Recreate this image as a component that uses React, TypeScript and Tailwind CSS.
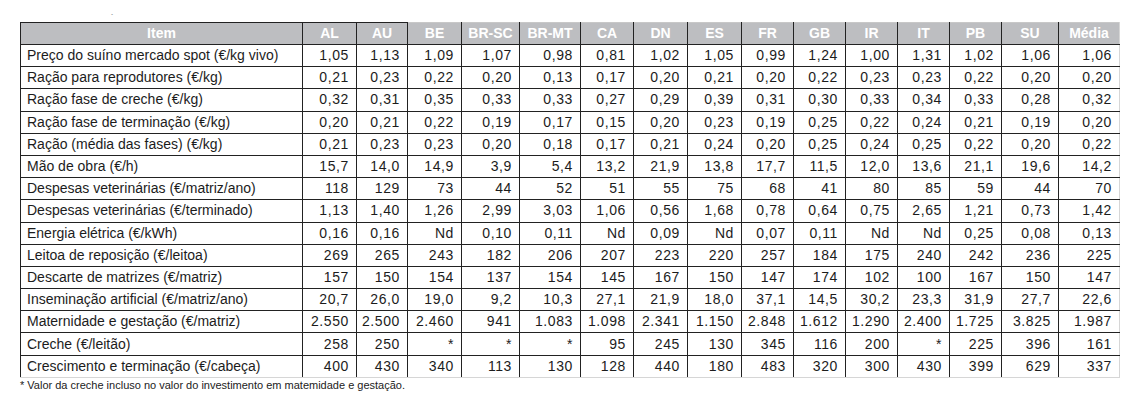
const cols = ['AL', 'AU', 'BE', 'BR-SC', 'BR-MT', 'CA', 'DN', 'ES', 'FR', 'GB', 'IR', 'IT', 'PB', 'SU', 'Média'];
const widths = [282, 54, 51, 54, 58, 61, 53, 54, 54, 52, 52, 52, 52, 52, 57, 61];

const rows: [string, string[]][] = [
  ['Preço do suíno mercado spot (€/kg vivo)', ['1,05', '1,13', '1,09', '1,07', '0,98', '0,81', '1,02', '1,05', '0,99', '1,24', '1,00', '1,31', '1,02', '1,06', '1,06']],
  ['Ração para reprodutores (€/kg)', ['0,21', '0,23', '0,22', '0,20', '0,13', '0,17', '0,20', '0,21', '0,20', '0,22', '0,23', '0,23', '0,22', '0,20', '0,20']],
  ['Ração fase de creche (€/kg)', ['0,32', '0,31', '0,35', '0,33', '0,33', '0,27', '0,29', '0,39', '0,31', '0,30', '0,33', '0,34', '0,33', '0,28', '0,32']],
  ['Ração fase de terminação (€/kg)', ['0,20', '0,21', '0,22', '0,19', '0,17', '0,15', '0,20', '0,23', '0,19', '0,25', '0,22', '0,24', '0,21', '0,19', '0,20']],
  ['Ração (média das fases) (€/kg)', ['0,21', '0,23', '0,23', '0,20', '0,18', '0,17', '0,21', '0,24', '0,20', '0,25', '0,24', '0,25', '0,22', '0,20', '0,22']],
  ['Mão de obra (€/h)', ['15,7', '14,0', '14,9', '3,9', '5,4', '13,2', '21,9', '13,8', '17,7', '11,5', '12,0', '13,6', '21,1', '19,6', '14,2']],
  ['Despesas veterinárias (€/matriz/ano)', ['118', '129', '73', '44', '52', '51', '55', '75', '68', '41', '80', '85', '59', '44', '70']],
  ['Despesas veterinárias (€/terminado)', ['1,13', '1,40', '1,26', '2,99', '3,03', '1,06', '0,56', '1,68', '0,78', '0,64', '0,75', '2,65', '1,21', '0,73', '1,42']],
  ['Energia elétrica (€/kWh)', ['0,16', '0,16', 'Nd', '0,10', '0,11', 'Nd', '0,09', 'Nd', '0,07', '0,11', 'Nd', 'Nd', '0,25', '0,08', '0,13']],
  ['Leitoa de reposição (€/leitoa)', ['269', '265', '243', '182', '206', '207', '223', '220', '257', '184', '175', '240', '242', '236', '225']],
  ['Descarte de matrizes (€/matriz)', ['157', '150', '154', '137', '154', '145', '167', '150', '147', '174', '102', '100', '167', '150', '147']],
  ['Inseminação artificial (€/matriz/ano)', ['20,7', '26,0', '19,0', '9,2', '10,3', '27,1', '21,9', '18,0', '37,1', '14,5', '30,2', '23,3', '31,9', '27,7', '22,6']],
  ['Maternidade e gestação (€/matriz)', ['2.550', '2.500', '2.460', '941', '1.083', '1.098', '2.341', '1.150', '2.848', '1.612', '1.290', '2.400', '1.725', '3.825', '1.987']],
  ['Creche (€/leitão)', ['258', '250', '*', '*', '*', '95', '245', '130', '345', '116', '200', '*', '225', '396', '161']],
  ['Crescimento e terminação (€/cabeça)', ['400', '430', '340', '113', '130', '128', '440', '180', '483', '320', '300', '430', '399', '629', '337']],
];

export default function App() {
  return (
    <div className="w-[1128px] h-[408px] bg-white text-[#1c1c1c] font-['Liberation_Sans',Arial,sans-serif]">
      <div className="h-[22px] pl-[111px] pt-[13px] text-[8px] leading-none text-[#444]">´</div>
      <div className="pl-[20px]">
        <table className="table-fixed border-collapse w-[1099px]">
          <colgroup>
            {widths.map((w, i) => (
              <col key={i} style={{ width: w }} />
            ))}
          </colgroup>
          <thead>
            <tr className="h-[22px] bg-[#bdbec1] text-white font-bold text-[14px]">
              <th className="border border-[#222] text-center font-bold">Item</th>
              {cols.map((c, i) => (
                <th
                  key={c}
                  className={
                    i < 2
                      ? 'border border-[#222] text-center font-bold'
                      : i === cols.length - 1
                        ? 'border-l border-[#222] border-t border-t-[#c8c8c8] border-r border-r-[#d6d6d6] border-b border-b-[#222] text-center font-bold'
                        : 'border-x border-[#222] border-b border-t border-t-[#c8c8c8] border-b-[#222] text-center font-bold'
                  }
                >
                  {c}
                </th>
              ))}
            </tr>
          </thead>
          <tbody className="text-[14px]">
            {rows.map(([label, vals], r) => {
              const last = r === rows.length - 1;
              return (
                <tr key={label} className="h-[22.2px]">
                  <td className={`border-x border-t border-[#222] pl-[6px] whitespace-nowrap ${last ? 'border-b border-b-[#d6d6d6]' : 'border-b border-b-[#222]'}`}>
                    {label}
                  </td>
                  {vals.map((v, i) => (
                    <td
                      key={i}
                      className={`border-l border-t border-[#222] text-right pr-[7px] tracking-[0.6px] ${i === vals.length - 1 ? 'border-r border-r-[#d6d6d6]' : 'border-r border-r-[#222]'} ${last ? 'border-b border-b-[#d6d6d6]' : 'border-b border-b-[#222]'}`}
                    >
                      {v}
                    </td>
                  ))}
                </tr>
              );
            })}
          </tbody>
        </table>
        <div className="text-[11px] leading-[12px] pt-[1px] text-[#222]">
          * Valor da creche incluso no valor do investimento em matemidade e gestação.
        </div>
      </div>
    </div>
  );
}
